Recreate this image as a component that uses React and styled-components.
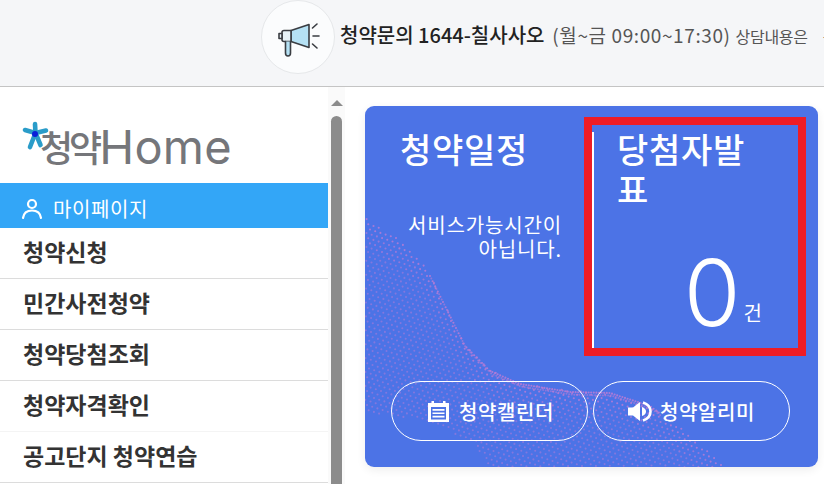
import React from "react";
import styled, { createGlobalStyle } from "styled-components";

const Global = createGlobalStyle`
  html, body { margin: 0; padding: 0; background: #fff; overflow: hidden; }
  body { font-family: "Noto Sans CJK KR", "Noto Sans", sans-serif; }
  * { box-sizing: border-box; }
`;

const Page = styled.div`
  width: 824px;
  height: 484px;
  overflow: hidden;
  display: flex;
  flex-direction: column;
`;

const TopBar = styled.header`
  height: 87px;
  flex: none;
  background: #f5f6f8;
  border-bottom: 1px solid #c4c4c4;
  display: flex;
  align-items: flex-start;
  padding-left: 261px;
  gap: 5px;
  white-space: nowrap;
  overflow: hidden;
`;

const IconCircle = styled.div`
  width: 74px;
  height: 74px;
  flex: none;
  border-radius: 50%;
  background: #fbfcfd;
  border: 1px solid #e6e8ea;
  display: flex;
  align-items: center;
  justify-content: center;
`;

const MegaphoneSvg = styled.svg`
  margin-top: 6px;
`;

const Notice = styled.p`
  margin: 0;
  line-height: 70px;
  font-size: 16px;
  letter-spacing: -0.3px;
  color: #555;
`;

const NoticeStrong = styled.strong`
  font-size: 20px;
  font-weight: 500;
  letter-spacing: 0;
  color: #222;
`;

const NoticeHours = styled.span`
  font-size: 19px;
  letter-spacing: 0.6px;
  margin: 0 5px 0 3px;
`;

const NoticeRest = styled.span`
  margin-right: 15px;
`;

const Body = styled.div`
  flex: 1;
  min-height: 0;
  display: flex;
`;

const Sidebar = styled.nav`
  width: 328px;
  flex: none;
  display: flex;
  flex-direction: column;
`;

const Logo = styled.div`
  height: 96px;
  flex: none;
  display: flex;
  align-items: center;
  padding: 22px 0 0 22px;
  color: #75767a;
`;

const LogoMark = styled.svg`
  width: 27px;
  height: 32px;
  flex: none;
  margin: -18px -9px 0 0;
  position: relative;
  z-index: 1;
`;

const LogoKo = styled.span`
  font-size: 36px;
  font-weight: 500;
  letter-spacing: -4px;
  line-height: 1;
`;

const LogoEn = styled.span`
  font-family: Inter, sans-serif;
  font-size: 47px;
  font-weight: 400;
  letter-spacing: 0.2px;
  line-height: 1;
  margin-left: 1px;
`;

const MyPage = styled.a`
  height: 45px;
  flex: none;
  background: #33a6f7;
  color: #fff;
  display: flex;
  align-items: center;
  gap: 10px;
  padding: 6px 0 0 21px;
  font-size: 20px;
  letter-spacing: 0.6px;
`;

const MenuItem = styled.a`
  height: 51px;
  flex: none;
  display: flex;
  align-items: center;
  padding: 0 0 4px 23px;
  font-size: 23px;
  font-weight: 700;
  letter-spacing: 0;
  color: #333;
  border-bottom: 1px solid ${(p) => (p.$faint ? "#f4f4f4" : "#dcdcdc")};
`;

const ScrollTrack = styled.div`
  width: 17px;
  flex: none;
  background: #fafafa;
  display: flex;
  flex-direction: column;
  align-items: center;
  padding-top: 13px;
  gap: 10px;
`;

const ScrollArrow = styled.div`
  width: 0;
  height: 0;
  border-left: 6px solid transparent;
  border-right: 6px solid transparent;
  border-bottom: 6px solid #8c8c8c;
`;

const ScrollThumb = styled.div`
  width: 11px;
  flex: 1;
  background: #8c8c8c;
  border-radius: 6px 6px 0 0;
`;

const Content = styled.main`
  flex: 1;
  padding: 19px 6px 0 20px;
`;

const Card = styled.section`
  position: relative;
  width: 453px;
  height: 361px;
  background: #4c73e6;
  border-radius: 9px;
  box-shadow: 0 3px 10px rgba(0, 0, 0, 0.07);
  overflow: hidden;
  color: #fff;
  display: flex;
  flex-direction: column;
`;

const Wave = styled.svg`
  position: absolute;
  inset: 0;
  width: 453px;
  height: 361px;
`;

const Panels = styled.div`
  position: relative;
  display: grid;
  grid-template-columns: 227px 226px;
  flex: none;
  height: 275px;
`;

const LeftPanel = styled.div`
  padding: 22px 30px 0 35px;
`;

const RightPanel = styled.div`
  position: relative;
  margin-top: 26px;
  height: 216px;
  border-left: 2px solid #fff;
  padding: 0 50px 0 23px;
  margin-bottom: 33px;
`;

const Title = styled.h2`
  margin: 0;
  font-size: 34px;
  font-weight: 500;
  line-height: 42px;
  letter-spacing: 0.75px;
  word-break: break-all;
`;

const RightTitle = styled(Title)`
  margin-top: -3px;
  line-height: 40px;
`;

const Closed = styled.p`
  margin: 43px 0 0;
  font-size: 20px;
  line-height: 24px;
  text-align: right;
  letter-spacing: 0.85px;
`;

const Count = styled.div`
  position: absolute;
  right: 56px;
  bottom: 0;
  display: flex;
  align-items: baseline;
  gap: 3px;
`;

const CountNumber = styled.span`
  font-family: Inter, sans-serif;
  font-size: 92px;
  font-weight: 300;
  line-height: 110px;
`;

const CountUnit = styled.span`
  font-size: 20px;
  transform: translateY(-5px);
`;

const Highlight = styled.div`
  position: absolute;
  left: 219px;
  top: 11px;
  width: 222px;
  height: 239px;
  border: 8px solid #ee1c25;
`;

const Actions = styled.div`
  position: relative;
  display: flex;
  gap: 5px;
  padding-left: 26px;
`;

const PillButton = styled.a`
  width: 197px;
  height: 60px;
  border: 1px solid #fff;
  border-radius: 30px;
  display: flex;
  align-items: center;
  justify-content: center;
  gap: ${(p) => p.$gap}px;
  padding-left: ${(p) => p.$inset}px;
  font-size: 20px;
  font-weight: 500;
  letter-spacing: 0.6px;
`;

const ridge = [[365,218],[400,240],[425,265],[445,305],[465,345],[490,370],[520,383],[570,391],[610,392],[650,405],[690,435],[725,467]];
const lower = [[365,412],[420,420],[470,440],[490,467]];
const interp = (pts, x) => {
  for (let i = 0; i < pts.length - 1; i++) {
    const [a, b] = pts[i], [c, d] = pts[i + 1];
    if (x >= a && x <= c) return b + ((d - b) * (x - a)) / (c - a);
  }
  return null;
};
const dots = [];
for (let u = -60; u < 140; u++) {
  for (let v = -60; v < 140; v++) {
    const x = 365 + u * 5.2 + v * 1.7;
    const y = 200 + u * 1.7 + v * 5.2;
    if (x < 365 || x > 818 || y > 467) continue;
    const top = interp(ridge, x);
    if (top === null || y < top) continue;
    const low = interp(lower, x);
    if (low !== null && y > low) continue;
    const d = y - top;
    dots.push({ x: x - 365, y: y - 106, o: d < 10 ? 0.85 : d < 26 ? 0.68 : 0.52, r: 1.05 });
  }
}
for (let x = 430; x < 660; x += 2.6) {
  const top = interp(ridge, x);
  dots.push({ x: x - 365, y: top - 106 + 1, o: 0.9, r: 1.05 });
  dots.push({ x: x + 1.3 - 365, y: top - 106 + 3.6, o: 0.6, r: 1 });
}

const Megaphone = () => (
  <MegaphoneSvg width="44" height="44" viewBox="0 0 44 44" fill="none" stroke="#3a3d42" strokeWidth="1.6" strokeLinejoin="round" strokeLinecap="round">
    <path d="M15 12.5 L33 6.5 V29.5 L15 23.5 Z" fill="#b5e1f4" />
    <path d="M8 12.5 H15 V23.5 H8 Q6 23.5 6 21.5 V14.5 Q6 12.5 8 12.5 Z" fill="#e6f1f6" />
    <path d="M3 15.5 H6 V20.5 H3 Z" fill="#e6f1f6" />
    <path d="M9.5 23.5 V35 Q9.5 38 12 38 Q14.5 38 14.5 35 V23.5" fill="#b5e1f4" />
    <path d="M36.5 10 L41 6 M37 18 H43 M36.5 26 L41 30" />
  </MegaphoneSvg>
);

const LogoStar = () => (
  <LogoMark viewBox="0 0 27 32">
    <g stroke="#2a9cc9" strokeWidth="4.6" strokeLinecap="round">
      <path d="M13.5 12 L13 3" />
      <path d="M13.5 12 L3 9" />
      <path d="M13.5 12 L24 9.5" />
      <path d="M13.5 12 L8 26" />
      <path d="M13.5 12 L18.5 24" />
    </g>
    <circle cx="13" cy="13" r="3" fill="#0a1fd8" />
  </LogoMark>
);

const UserIcon = () => (
  <svg width="22" height="22" viewBox="0 0 22 22" fill="none" stroke="#fff" strokeWidth="2.2" strokeLinecap="round">
    <circle cx="11" cy="6" r="4" />
    <path d="M2 20 Q3 12.5 11 12.5 Q19 12.5 20 20" />
  </svg>
);

const CalendarIcon = () => (
  <svg width="21" height="21" viewBox="0 0 21 21">
    <path fill="#fff" d="M0 2 H3.5 V0 H6 V2 H15 V0 H17.5 V2 H21 V21 H0 Z" />
    <path fill="#4c73e6" d="M3 6 H18 V18.5 H3 Z" />
    <path fill="#fff" d="M4.5 8 H16.5 V9.7 H4.5 Z M4.5 11.4 H16.5 V13.1 H4.5 Z M4.5 14.8 H16.5 V16.5 H4.5 Z" />
  </svg>
);

const SpeakerIcon = () => (
  <svg width="24" height="21" viewBox="0 0 24 21">
    <path fill="#fff" d="M0 6.5 H5 L12 1 V20 L5 14.5 H0 Z" />
    <path fill="none" stroke="#fff" strokeWidth="2.6" d="M15 1.5 Q22.5 4 22.5 10.5 Q22.5 17 15 19.5" />
    <path fill="#fff" d="M14 6 Q18 7.5 18 10.5 Q18 13.5 14 15 Z" />
  </svg>
);

export default function App() {
  return (
    <Page>
      <Global />
      <TopBar>
        <IconCircle><Megaphone /></IconCircle>
        <Notice>
          <NoticeStrong>청약문의 1644-칠사사오</NoticeStrong>
          <NoticeHours> (월~금 09:00~17:30)</NoticeHours>
          <NoticeRest>상담내용은</NoticeRest>녹음됩니다
        </Notice>
      </TopBar>
      <Body>
        <Sidebar>
          <Logo>
            <LogoStar />
            <LogoKo>청약</LogoKo>
            <LogoEn>Home</LogoEn>
          </Logo>
          <MyPage><UserIcon />마이페이지</MyPage>
          <MenuItem>청약신청</MenuItem>
          <MenuItem>민간사전청약</MenuItem>
          <MenuItem>청약당첨조회</MenuItem>
          <MenuItem $faint>청약자격확인</MenuItem>
          <MenuItem>공고단지 청약연습</MenuItem>
        </Sidebar>
        <ScrollTrack>
          <ScrollArrow />
          <ScrollThumb />
        </ScrollTrack>
        <Content>
          <Card>
            <Wave viewBox="0 0 453 361">
              {dots.map((d, i) => (
                <circle key={i} cx={d.x} cy={d.y} r={d.r} fill="#b57bd6" opacity={d.o} />
              ))}
            </Wave>
            <Panels>
              <LeftPanel>
                <Title>청약일정</Title>
                <Closed>서비스가능시간이<br />아닙니다.</Closed>
              </LeftPanel>
              <RightPanel>
                <RightTitle>당첨자발표</RightTitle>
                <Count>
                  <CountNumber>0</CountNumber>
                  <CountUnit>건</CountUnit>
                </Count>
              </RightPanel>
            </Panels>
            <Actions>
              <PillButton $gap={10} $inset={3}><CalendarIcon />청약캘린더</PillButton>
              <PillButton $gap={8} $inset={0}><SpeakerIcon />청약알리미</PillButton>
            </Actions>
            <Highlight />
          </Card>
        </Content>
      </Body>
    </Page>
  );
}
